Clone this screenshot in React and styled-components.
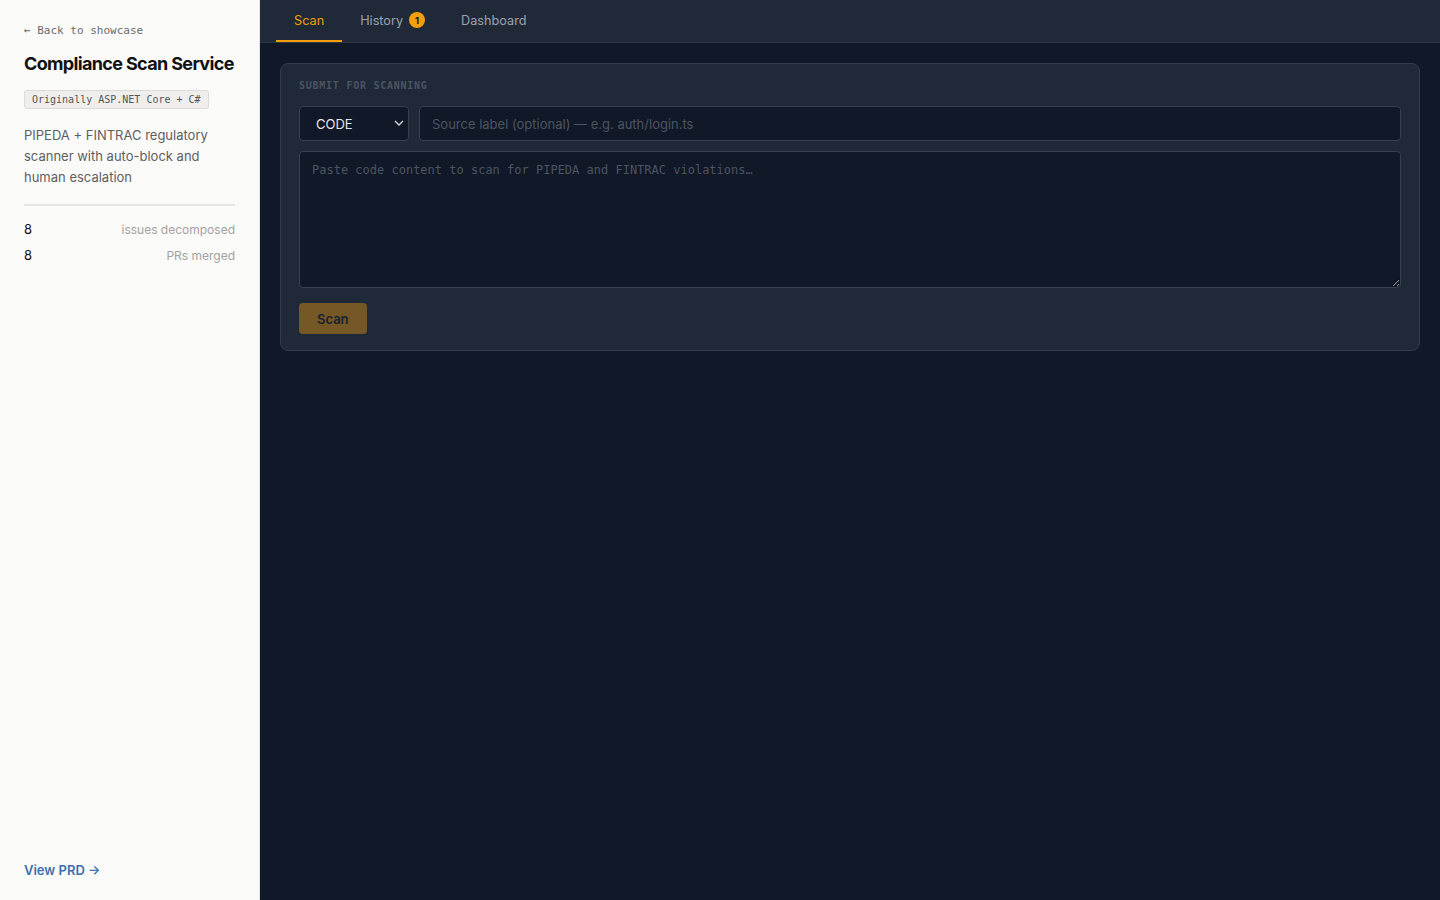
import React from "react";
import styled, { createGlobalStyle } from "styled-components";

const Global = createGlobalStyle`
  html, body { margin: 0; padding: 0; height: 100%; }
  body { font-family: Inter, "Noto Sans", sans-serif; background: #111827; }
  #root { height: 100%; }
  * { box-sizing: border-box; }
`;

const Shell = styled.div`
  display: flex;
  height: 100vh;
  width: 100%;
`;

const Sidebar = styled.aside`
  width: 260px;
  flex-shrink: 0;
  background: #fafaf9;
  border-right: 1px solid #e5e5e3;
  padding: 24px 24px 22px;
  display: flex;
  flex-direction: column;
`;

const BackLink = styled.a`
  font-family: "DejaVu Sans Mono", "Liberation Mono", monospace;
  font-size: 11px;
  color: #6b6b6b;
  text-decoration: none;
  line-height: 14px;
`;

const Title = styled.h1`
  margin: 14px 0 0;
  font-size: 18px;
  font-weight: 700;
  color: #111;
  letter-spacing: -0.65px;
  line-height: 24px;
  white-space: nowrap;
`;

const OriginBadge = styled.span`
  align-self: flex-start;
  margin-top: 14px;
  font-family: "DejaVu Sans Mono", "Liberation Mono", monospace;
  font-size: 10px;
  color: #555;
  background: #efeeec;
  border: 1px solid #dcdbd8;
  border-radius: 3px;
  padding: 2px 7px;
  line-height: 13px;
`;

const Description = styled.p`
  margin: 16px 0 0;
  font-size: 13px;
  line-height: 21px;
  color: #5f5f5f;
`;

const Divider = styled.hr`
  border: 0;
  border-top: 2px solid #e6e5e3;
  margin: 16px 0 10px;
  width: 100%;
`;

const StatRow = styled.div`
  display: flex;
  justify-content: space-between;
  align-items: baseline;
  height: 26px;
  line-height: 26px;
`;

const StatValue = styled.span`
  font-size: 13px;
  color: #111;
`;

const StatLabel = styled.span`
  font-size: 12px;
  color: #a3a3a3;
`;

const Spacer = styled.div`
  flex: 1;
`;

const PrdLink = styled.a`
  font-size: 13px;
  font-weight: 600;
  color: #3f6fae;
  text-decoration: none;
`;

const Main = styled.main`
  flex: 1;
  display: flex;
  flex-direction: column;
  background: #111827;
`;

const TabBar = styled.nav`
  height: 43px;
  background: #1f2937;
  border-bottom: 1px solid #2d3646;
  display: flex;
  padding-left: 16px;
`;

const Tab = styled.button`
  background: none;
  border: 0;
  border-bottom: 2px solid ${(p) => (p.$active ? "#f59e0b" : "transparent")};
  color: ${(p) => (p.$active ? "#f59e0b" : "#9ca3af")};
  font-family: Inter, sans-serif;
  font-size: 12.7px;
  padding: 0 18px;
  height: 42px;
  display: flex;
  align-items: center;
  gap: 6px;
  cursor: pointer;
`;

const CountBadge = styled.span`
  width: 16px;
  height: 16px;
  border-radius: 50%;
  background: #f59e0b;
  color: #111827;
  font-size: 9.5px;
  font-weight: 700;
  display: inline-flex;
  align-items: center;
  justify-content: center;
`;

const Content = styled.div`
  padding: 20px 20px;
`;

const Card = styled.section`
  background: #1f2937;
  border: 1px solid #323c4c;
  border-radius: 8px;
  padding: 16px 18px 16px;
  display: flex;
  flex-direction: column;
`;

const CardLabel = styled.h2`
  margin: 0;
  font-family: "DejaVu Sans Mono", "Liberation Mono", monospace;
  font-size: 10px;
  font-weight: 700;
  letter-spacing: 0.75px;
  color: #4b5563;
  line-height: 12px;
`;

const FieldRow = styled.div`
  display: flex;
  gap: 10px;
  margin-top: 14px;
`;

const SelectWrap = styled.div`
  position: relative;
  width: 110px;
`;

const Select = styled.select`
  appearance: none;
  width: 100%;
  height: 35px;
  background: #111827;
  border: 1px solid #374151;
  border-radius: 4px;
  color: #e5e7eb;
  font-family: Inter, sans-serif;
  font-size: 13px;
  padding: 0 16px;
`;

const Chevron = styled.svg`
  position: absolute;
  right: 5px;
  top: 13px;
  pointer-events: none;
`;

const TextInput = styled.input`
  flex: 1;
  height: 35px;
  background: #111827;
  border: 1px solid #374151;
  border-radius: 4px;
  color: #e5e7eb;
  font-family: Inter, sans-serif;
  font-size: 13px;
  padding: 0 12px;
  &::placeholder { color: #4b5563; }
`;

const CodeArea = styled.textarea`
  margin-top: 10px;
  height: 137px;
  background: #111827;
  border: 1px solid #374151;
  border-radius: 4px;
  color: #e5e7eb;
  font-family: "DejaVu Sans Mono", "Liberation Mono", monospace;
  font-size: 12px;
  line-height: 17px;
  padding: 10px 12px;
  resize: vertical;
  &::placeholder { color: #4b5563; }
`;

const ScanButton = styled.button`
  align-self: flex-start;
  margin-top: 15px;
  height: 31px;
  padding: 0 18px;
  background: #f59e0b;
  color: #111827;
  border: 0;
  border-radius: 4px;
  font-family: Inter, sans-serif;
  font-size: 13px;
  font-weight: 600;
  opacity: 0.4;
`;

export default function App() {
  return (
    <>
      <Global />
      <Shell>
        <Sidebar>
          <BackLink href="#">← Back to showcase</BackLink>
          <Title>Compliance Scan Service</Title>
          <OriginBadge>Originally ASP.NET Core + C#</OriginBadge>
          <Description>
            PIPEDA + FINTRAC regulatory scanner with auto-block and human escalation
          </Description>
          <Divider />
          <StatRow>
            <StatValue>8</StatValue>
            <StatLabel>issues decomposed</StatLabel>
          </StatRow>
          <StatRow>
            <StatValue>8</StatValue>
            <StatLabel>PRs merged</StatLabel>
          </StatRow>
          <Spacer />
          <PrdLink href="#">View PRD →</PrdLink>
        </Sidebar>
        <Main>
          <TabBar>
            <Tab $active>Scan</Tab>
            <Tab>
              History <CountBadge>1</CountBadge>
            </Tab>
            <Tab>Dashboard</Tab>
          </TabBar>
          <Content>
            <Card>
              <CardLabel>SUBMIT FOR SCANNING</CardLabel>
              <FieldRow>
                <SelectWrap>
                  <Select defaultValue="CODE">
                    <option>CODE</option>
                    <option>CONFIG</option>
                    <option>DOCUMENT</option>
                  </Select>
                  <Chevron width="10" height="8" viewBox="0 0 10 8">
                    <path d="M1 2 L5 6 L9 2" fill="none" stroke="#d1d5db" strokeWidth="1.4" />
                  </Chevron>
                </SelectWrap>
                <TextInput placeholder="Source label (optional) — e.g. auth/login.ts" />
              </FieldRow>
              <CodeArea placeholder="Paste code content to scan for PIPEDA and FINTRAC violations…" />
              <ScanButton disabled>Scan</ScanButton>
            </Card>
          </Content>
        </Main>
      </Shell>
    </>
  );
}
